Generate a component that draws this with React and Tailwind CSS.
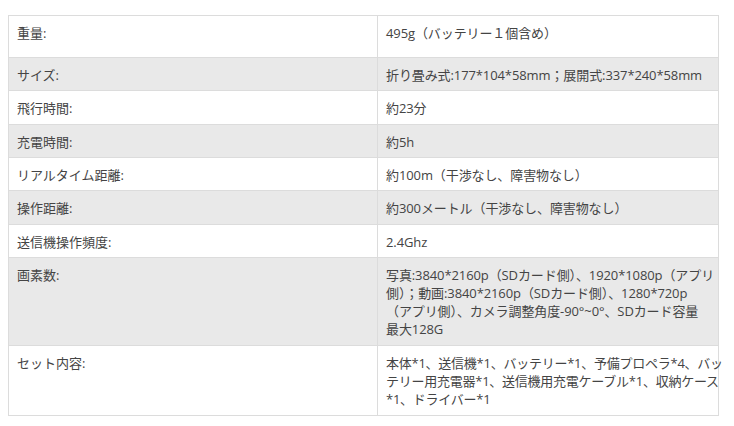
import React from 'react';

const specs = [
  { label: '重量:', lines: ['495g（バッテリー１個含め）'], pad: 'pb-[15px]' },
  { label: 'サイズ:', lines: ['折り畳み式:177*104*58mm；展開式:337*240*58mm'] },
  { label: '飛行時間:', lines: ['約23分'], pad: 'pb-[7px]' },
  { label: '充電時間:', lines: ['約5h'] },
  { label: 'リアルタイム距離:', lines: ['約100m（干渉なし、障害物なし）'] },
  { label: '操作距離:', lines: ['約300メートル（干渉なし、障害物なし）'], pad: 'pb-[7px]' },
  { label: '送信機操作頻度:', lines: ['2.4Ghz'] },
  {
    label: '画素数:',
    pad: 'pb-[7px]',
    lines: [
      '写真:3840*2160p（SDカード側）、1920*1080p（アプリ',
      '側）；動画:3840*2160p（SDカード側）、1280*720p',
      '（アプリ側）、カメラ調整角度-90°~0°、SDカード容量',
      '最大128G',
    ],
  },
  {
    label: 'セット内容:',
    pad: 'pb-[7px]',
    tight: true,
    lines: [
      '本体*1、送信機*1、バッテリー*1、予備プロペラ*4、バッ',
      'テリー用充電器*1、送信機用充電ケーブル*1、収納ケース',
      '*1、ドライバー*1',
    ],
  },
];

const App = () => {
  return (
    <div
      className="min-h-screen bg-white pl-[8px] pt-[15px] text-[13px] leading-[18px] text-[#444]"
      style={{ fontFamily: '"Open Sans", "Noto Sans CJK JP", sans-serif' }}
    >
      <table className="w-[711px] table-fixed border-collapse border border-[#dcdcdc]">
        <colgroup>
          <col className="w-[369px]" />
          <col />
        </colgroup>
        <tbody>
          {specs.map((row, i) => (
            <tr key={row.label} className={i % 2 === 1 ? 'bg-[#e9e9e9]' : 'bg-white'}>
              <td className={`border border-[#dcdcdc] px-[8px] pt-[8px] align-top ${row.pad || 'pb-[6px]'}`}>
                <div className="h-[18px]">{row.label}</div>
              </td>
              <td
                className={`border border-[#dcdcdc] pl-[8px] pr-[4px] pt-[8px] align-top whitespace-nowrap ${
                  row.tight ? 'tracking-[-0.25px]' : 'tracking-[-0.1px]'
                } ${row.pad || 'pb-[6px]'}`}
              >
                {row.lines.map((line, j) => (
                  <div key={j} className="h-[18px]">{line}</div>
                ))}
              </td>
            </tr>
          ))}
        </tbody>
      </table>
    </div>
  );
};

export default App;
